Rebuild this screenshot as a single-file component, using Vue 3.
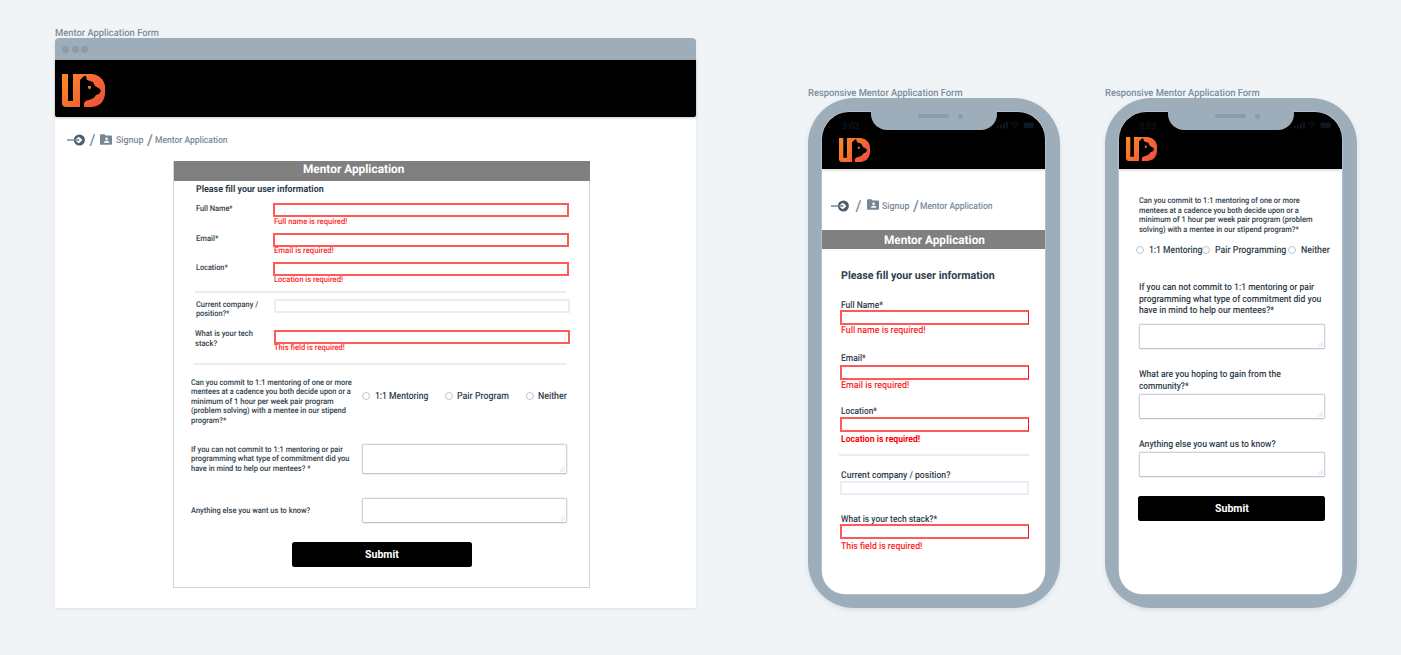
<script setup>
import { h } from 'vue'

// Condenses a line of text horizontally to its design width.
const vFit = {
  mounted(el, { value }) {
    const natural = el.offsetWidth
    if (!natural) return
    el.style.transform = `scaleX(${value / natural})`
    el.style.marginRight = `${value - natural}px`
  },
}

const desktopFields = [
  { id: 'name', label: [['Full Name*', 37]], error: ['Full name is required!', 73.5] },
  { id: 'email', label: [['Email*', 22]], error: ['Email is required!', 60] },
  { id: 'location', label: [['Location*', 32]], error: ['Location is required!', 69] },
]

const phoneFields = [
  { id: 'name', label: ['Full Name*', 42], error: ['Full name is required!', 84.5] },
  { id: 'email', label: ['Email*', 25], error: ['Email is required!', 68] },
  { id: 'location', label: ['Location*', 36], error: ['Location is required!', 79], strong: true },
  { id: 'company', label: ['Current company / position?', 109] },
  { id: 'stack', label: ['What is your tech stack?*', 96.5], error: ['This field is required!', 81.5] },
]

const commitDesktop = [
  ['Can you commit to 1:1 mentoring of one or more', 161],
  ['mentees at a cadence you both decide upon or a', 160],
  ['minimum of 1 hour per week pair program', 142.5],
  ['(problem solving) with a mentee in our stipend', 155],
  ['program?*', 35.5],
]
const otherDesktop = [
  ['If you can not commit to 1:1 mentoring or pair', 152],
  ['programming what type of commitment did you', 158.5],
  ['have in mind to help our mentees? *', 119.5],
]
const commitPhone = [
  ['Can you commit to 1:1 mentoring of one or more', 161],
  ['mentees at a cadence you both decide upon or a', 160],
  ['minimum of 1 hour per week pair program (problem', 174],
  ['solving) with a mentee in our stipend program?*', 159.5],
]
const otherPhone = [
  ['If you can not commit to 1:1 mentoring or pair', 175.5],
  ['programming what type of commitment did you', 182.5],
  ['have in mind to help our mentees?*', 135.5],
]
const gainPhone = [
  ['What are you hoping to gain from the', 142],
  ['community?*', 50],
]

const Logo = (props) =>
  h('svg', { viewBox: '0 0 43 33', preserveAspectRatio: 'none' }, [
    h('defs', [
      h('linearGradient', { id: props.gid, x1: 0, y1: 0, x2: 1, y2: 0.6 }, [
        h('stop', { offset: 0, 'stop-color': '#f98a26' }),
        h('stop', { offset: 1, 'stop-color': '#f1553a' }),
      ]),
    ]),
    h('path', {
      fill: `url(#${props.gid})`,
      d: 'M0 0H6V27H11V0H30C38 1 42 6 43 12V20C42 28 38 32 30 33H22V29C23 27 25 26 27 26C31 25 33 23 34 21L37 20L39 17L38 15L33 12L31 8L25 6L24 2L22 2L20 4L18 6V33H4Q0 33 0 29Z',
    }),
    h('path', { fill: '#f4692f', d: 'M26 12H29V14L27.5 15.5L26 14Z' }),
  ])
Logo.props = ['gid']

const LoginIcon = () =>
  h('svg', { viewBox: '0 0 19 12' }, [
    h('circle', { cx: 12.4, cy: 6, r: 5.5, fill: '#4a5b6b' }),
    h('circle', { cx: 11.6, cy: 6, r: 2.6, fill: '#fff' }),
    h('path', { d: 'M11.2 2.6L15.6 6L11.2 9.4Z', fill: '#fff' }),
    h('path', { d: 'M0 6H11', stroke: '#758492', 'stroke-width': 1.4 }),
    h('path', { d: 'M10.6 4.4L12.8 6L10.6 7.6Z', fill: '#758492' }),
  ])

const FolderIcon = () =>
  h('svg', { viewBox: '0 0 12 11' }, [
    h('path', { d: 'M0 1.2Q0 .3 .9 .3H4.4L5.6 1.6H11.1Q12 1.6 12 2.5V9.8Q12 10.7 11.1 10.7H.9Q0 10.7 0 9.8Z', fill: '#758797' }),
    h('circle', { cx: 6.6, cy: 4.7, r: 1.3, fill: '#fff' }),
    h('path', { d: 'M3.8 8.8C3.8 7.3 5.5 6.7 6.6 6.7S9.4 7.3 9.4 8.8Z', fill: '#fff' }),
  ])

const Grip = () =>
  h('svg', { viewBox: '0 0 6 6' }, [
    h('path', { d: 'M0 5.5L5.5 0M2 6L6 2M4 6L6 4', stroke: '#c8d0d8', 'stroke-width': 0.6, fill: 'none' }),
  ])

const StatusIcons = () =>
  h('svg', { viewBox: '0 0 38 8', fill: '#0d1822' }, [
    h('path', { d: 'M0 5H2V7.5H0ZM3 4H5V7.5H3ZM6 2.5H8V7.5H6ZM9 1H11V7.5H9Z' }),
    h('path', { d: 'M14 3Q18 -.5 22 3M15.5 5Q18 3 20.5 5', stroke: '#0d1822', 'stroke-width': 1.2, fill: 'none' }),
    h('path', { d: 'M16.8 6L18 7.5L19.2 6Z' }),
    h('rect', { x: 26.5, y: 1.5, width: 10.5, height: 5.5, rx: 1.2 }),
  ])
</script>

<template>
  <main class="canvas">
    <section class="board desktop">
      <div class="caption"><span v-fit="104" class="t">Mentor Application Form</span></div>
      <div class="window">
        <div class="chrome"><i></i><i></i><i></i></div>
        <header class="bar"><Logo gid="logo-desktop" class="logo" /></header>
        <nav class="crumbs">
          <LoginIcon class="login" /><span class="slash">/</span><FolderIcon class="folder" />
          <span v-fit="27" class="t signup">Signup</span><span class="slash second">/</span>
          <span v-fit="72.5" class="t">Mentor Application</span>
        </nav>
        <form class="form" @submit.prevent>
          <div class="title"><span v-fit="101.5" class="t">Mentor Application</span></div>
          <div class="intro"><span v-fit="128" class="t">Please fill your user information</span></div>
          <div v-for="f in desktopFields" :key="f.id" class="field" :class="f.id">
            <div class="label"><span v-for="l in f.label" :key="l[0]" v-fit="l[1]" class="t">{{ l[0] }}</span></div>
            <div class="entry">
              <div class="input bad"></div>
              <div class="error"><span v-fit="f.error[1]" class="t">{{ f.error[0] }}</span></div>
            </div>
          </div>
          <div class="rule"></div>
          <div class="field company">
            <div class="label"><span v-fit="62.5" class="t">Current company /</span><span v-fit="33" class="t">position?*</span></div>
            <div class="entry"><div class="input"></div></div>
          </div>
          <div class="field stack">
            <div class="label"><span v-fit="58" class="t">What is your tech</span><span v-fit="22" class="t">stack?</span></div>
            <div class="entry">
              <div class="input bad"></div>
              <div class="error"><span v-fit="71" class="t">This field is required!</span></div>
            </div>
          </div>
          <div class="rule low"></div>
          <div class="ask commit">
            <div class="question"><span v-for="l in commitDesktop" :key="l[0]" v-fit="l[1]" class="t">{{ l[0] }}</span></div>
            <div class="radios">
              <label><i></i><span v-fit="53" class="t">1:1 Mentoring</span></label>
              <label><i></i><span v-fit="52" class="t">Pair Program</span></label>
              <label><i></i><span v-fit="29" class="t">Neither</span></label>
            </div>
          </div>
          <div class="ask other">
            <div class="question"><span v-for="l in otherDesktop" :key="l[0]" v-fit="l[1]" class="t">{{ l[0] }}</span></div>
            <div class="area tall"><Grip class="grip" /></div>
          </div>
          <div class="ask more">
            <div class="question"><span v-fit="119" class="t">Anything else you want us to know?</span></div>
            <div class="area"><Grip class="grip" /></div>
          </div>
          <button class="submit"><span v-fit="33.5" class="t">Submit</span></button>
        </form>
      </div>
    </section>

    <section class="board phone-one">
      <div class="caption"><span v-fit="154.5" class="t">Responsive Mentor Application Form</span></div>
      <div class="phone">
        <div class="screen">
          <header class="bar"><Logo gid="logo-one" class="logo" /></header>
          <nav class="crumbs">
            <LoginIcon class="login" /><span class="slash">/</span><FolderIcon class="folder" />
            <span v-fit="27" class="t signup">Signup</span><span class="slash second">/</span>
            <span v-fit="72.5" class="t">Mentor Application</span>
          </nav>
          <div class="title"><span v-fit="101" class="t">Mentor Application</span></div>
          <div class="intro"><span v-fit="153.5" class="t">Please fill your user information</span></div>
          <template v-for="f in phoneFields" :key="f.id">
            <div class="entry" :class="f.id">
              <div class="label"><span v-fit="f.label[1]" class="t">{{ f.label[0] }}</span></div>
              <div class="input" :class="{ bad: f.error }"></div>
              <div v-if="f.error" class="error" :class="{ strong: f.strong }"><span v-fit="f.error[1]" class="t">{{ f.error[0] }}</span></div>
            </div>
          </template>
        </div>
        <div class="notch"><i class="speaker"></i><i class="camera"></i></div>
        <div class="clock"><span v-fit="17.5" class="t">3:03</span></div>
        <StatusIcons class="status" />
      </div>
    </section>

    <section class="board phone-two">
      <div class="caption"><span v-fit="154.5" class="t">Responsive Mentor Application Form</span></div>
      <div class="phone">
        <div class="screen">
          <header class="bar"><Logo gid="logo-two" class="logo" /></header>
          <div class="question small"><span v-for="l in commitPhone" :key="l[0]" v-fit="l[1]" class="t">{{ l[0] }}</span></div>
          <div class="radios">
            <label><i></i><span v-fit="53" class="t">1:1 Mentoring</span></label>
            <label><i></i><span v-fit="71" class="t">Pair Programming</span></label>
            <label class="last"><i></i><span v-fit="29" class="t">Neither</span></label>
          </div>
          <div class="question other"><span v-for="l in otherPhone" :key="l[0]" v-fit="l[1]" class="t">{{ l[0] }}</span></div>
          <div class="area first"><Grip class="grip" /></div>
          <div class="question gain"><span v-for="l in gainPhone" :key="l[0]" v-fit="l[1]" class="t">{{ l[0] }}</span></div>
          <div class="area second"><Grip class="grip" /></div>
          <div class="question more"><span v-fit="136.5" class="t">Anything else you want us to know?</span></div>
          <div class="area third"><Grip class="grip" /></div>
          <button class="submit"><span v-fit="33.5" class="t">Submit</span></button>
        </div>
        <div class="notch"><i class="speaker"></i><i class="camera"></i></div>
        <div class="clock"><span v-fit="17.5" class="t">3:03</span></div>
        <StatusIcons class="status" />
      </div>
    </section>
  </main>
</template>

<style>
body { background: #f0f4f7; overflow: hidden; }
</style>

<style scoped>
.canvas, .canvas * { box-sizing: border-box; }
.canvas {
  position: relative; width: 1401px; height: 655px; overflow: hidden; background: #f0f4f7;
  font-family: Roboto, "Liberation Sans", sans-serif; font-weight: 500; color: #303e4b;
  text-rendering: geometricPrecision;
}
.t { display: block; width: max-content; white-space: nowrap; transform-origin: 0 50%; }
.board { position: absolute; }
.desktop { left: 55px; top: 27px; width: 641px; }
.phone-one { left: 808px; top: 87px; width: 252px; }
.phone-two { left: 1105px; top: 87px; width: 252px; }
.caption { height: 11px; font-size: 10px; line-height: 14px; color: #7b8b99; }

/* shared parts */
.bar { background: #000; box-shadow: 0 1px 3px rgba(0, 0, 0, .2); border-radius: 0 0 2px 2px; }
.logo { display: block; }
.crumbs { display: flex; align-items: center; height: 14px; font-size: 9.5px; line-height: 14px; color: #7b8b99; }
.crumbs .t { padding-top: 1px; }
.login { width: 19px; height: 12px; flex: none; }
.folder { width: 12px; height: 11px; flex: none; }
.slash { font-size: 15px; font-weight: 500; width: 6px; flex: none; }
.title { background: #808080; color: #fff; font-weight: 700; font-size: 12px; display: flex; justify-content: center; }
.input { border: 2px solid #e9eef4; background: #fff; }
.input.bad { border-color: #ff5a5a; }
.error { color: #ff2626; }
.area { position: relative; height: 25px; border: 1px solid #cbd4dd; border-bottom-color: #b9c5d2; border-radius: 2px; background: #fff; box-shadow: 0 0 0 .5px #dde3ea; }
.grip { position: absolute; right: 1px; bottom: 1px; width: 6px; height: 6px; }
.submit { display: flex; align-items: center; justify-content: center; height: 25px; padding: 0; border: 0; border-radius: 2.5px; background: #000; color: #fff; font: 700 11px/14px Roboto, sans-serif; }
.radios { display: flex; align-items: flex-start; font-size: 10px; line-height: 12px; }
.radios label { display: flex; align-items: center; height: 12px; }
.radios i { width: 8px; height: 8px; border: 1px solid #bac5d0; border-radius: 50%; margin: -1px 4.5px 0 0; flex: none; }
.radios .t { padding-top: 1px; }

/* desktop window */
.window { height: 570px; background: #fff; border-radius: 4px 4px 0 0; box-shadow: 0 1px 3px rgba(80, 100, 120, .12); }
.chrome { height: 22px; background: #9eadba; border-radius: 4px 4px 0 0; display: flex; align-items: center; gap: 2.5px; padding-left: 7px; }
.chrome i { width: 7px; height: 7px; border-radius: 50%; background: #8b9baa; }
.desktop .bar { height: 57px; padding: 14px 0 0 7px; }
.desktop .logo { width: 43px; height: 33px; }
.desktop .crumbs { margin: 16px 0 0 12px; }
.desktop .login { margin-right: 3.5px; }
.desktop .folder { margin: 0 0 2px 4px; }
.desktop .signup { margin-left: 4px; }
.desktop .second { margin-left: 4px; }
.desktop .crumbs .t:last-child { margin-left: 2.5px; }
.form { width: 417px; height: 427px; margin: 14px 0 0 118px; border: 1px solid #cdd6df; border-top: 0; font-size: 8px; line-height: 9.6px; }
.form .title { height: 20px; margin: 0 -1px 0 0; line-height: 17px; padding-right: 56px; }
.form .intro { height: 22px; padding: 2.5px 0 0 22px; font-size: 9.5px; line-height: 12px; font-weight: 700; }
.field { display: grid; grid-template-columns: 77px 296px; height: 29px; margin-left: 22px; }
.field.name { height: 30px; }
.field .label { padding-top: .7px; }
.field .input { height: 13.5px; }
.field .error { height: 9px; padding-left: 1px; line-height: 9px; }
.field.email .error, .field.location .error, .field.stack .error { margin-top: -1px; }
.rule { width: 371px; height: 2px; margin: 0 0 6px 21px; background: #e9eef2; }
.field.company { height: 31px; grid-template-columns: 78px 296px; }
.field.stack { height: 33px; margin-left: 21px; grid-template-columns: 79px 296px; }
.field.stack .label { padding-top: 0; margin-top: -1px; }
.field.stack .error { padding-left: 0; }
.rule.low { width: 374px; margin-left: 19px; margin-bottom: 0; }
.ask { display: grid; grid-template-columns: 170.5px 205px; padding-left: 17px; }
.ask.commit { height: 79px; padding-top: 12.5px; }
.commit .radios { margin: 13px 0 0 .5px; width: 205px; justify-content: space-between; }
.ask.other { height: 54px; }
.other .question { padding-top: .7px; }
.other .area.tall { height: 29.5px; }
.ask.more { height: 44px; }
.more .question { padding-top: 7.5px; }
.more .area { margin-left: .5px; margin-right: -.5px; }
.form .submit { width: 180px; margin-left: 118px; }

/* phones */
.phone { position: relative; height: 510px; margin-top: 0; background: #9eadba; border-radius: 46px; padding: 14px; box-shadow: 0 2px 5px rgba(80, 100, 120, .14); }
.screen { width: 223.4px; height: 482px; border-radius: 27px 27px 23px 23px; overflow: hidden; background: #fff; box-shadow: 0 0 0 .5px #c6d0d8; }
.phone .bar { height: 57px; padding: 26px 0 0 17px; border-radius: 0; }
.phone .logo { width: 31px; height: 24px; }
.phone-two .bar { padding: 25px 0 0 7px; }
.notch { position: absolute; left: 63px; top: 12px; width: 126px; height: 20px; background: #9eadba; border-radius: 0 0 16px 16px; display: flex; justify-content: flex-end; align-items: flex-start; padding: 4px 34px 0 0; gap: 9px; }
.phone-two .notch, .phone-two .status { margin-left: -.5px; }
.speaker { width: 31px; height: 4px; border-radius: 2px; background: #8b9baa; }
.camera { width: 5px; height: 5px; border-radius: 50%; background: #8b9baa; margin-top: -.5px; }
.clock { position: absolute; left: 34px; top: 22px; font-size: 9.5px; line-height: 13px; color: #0d1822; }
.status { position: absolute; left: 189px; top: 23px; width: 38px; height: 8px; }
.phone-one .crumbs { margin: 30px 0 0 9px; }
.phone-one .slash { margin-left: 5.5px; }
.phone-one .folder { margin: 0 2.5px 3px 5.5px; }
.phone-one .second { margin-left: 4px; }
.phone-one .crumbs .t:last-child { margin-left: 1.5px; }
.phone-one .title { height: 19px; margin-top: 17px; line-height: 20px; padding-left: 1px; }
.phone-one .intro { height: 51px; padding: 19.5px 0 0 19px; font-size: 11px; line-height: 13px; font-weight: 700; }
.phone-one .entry { margin-left: 18px; width: 189px; font-size: 9.5px; line-height: 12px; }
.phone-one .label { height: 10px; padding-left: 1px; }
.phone-one .input { height: 15px; }
.phone-one .input.bad { border-right: 1px solid #ff1010; }
.phone-one .error { height: 9.5px; margin-top: 1px; padding-left: 1px; line-height: 10px; }
.phone-one .error.strong { color: #ff0000; font-weight: 700; line-height: 11px; }
.phone-one .entry.name { height: 53px; }
.phone-one .entry.email { height: 53px; }
.phone-one .email .label { height: 12px; }
.phone-one .entry.location { height: 50px; border-bottom: 2px solid #e9eef2; margin-left: 17px; width: 190px; padding-left: 1px; }
.phone-one .location .label { height: 11px; }
.phone-one .location .error { margin-top: 2px; }
.phone-one .entry.company { height: 58px; padding-top: 14px; }
.phone-one .company .label { height: 11px; }
.phone-one .company .input { height: 14px; }
.phone-one .stack .error { margin-top: 3px; }
.phone-two .question { margin-left: 20px; font-size: 9.5px; line-height: 11.5px; }
.phone-two .question.small { margin-top: 27px; height: 48px; font-size: 8px; line-height: 9.6px; }
.phone-two .radios { margin-left: 17px; padding-top: .8px; height: 38px; }
.phone-two .radios label + label { margin-left: .5px; }
.phone-two .radios label.last { margin-left: 2px; }
.phone-two .question.other { height: 42px; }
.phone-two .area { width: 186px; margin-left: 19.5px; }
.phone-two .question.gain { margin-top: 20px; height: 25px; }
.phone-two .question.more { margin-top: 20px; padding: 0; height: 9px; line-height: 12px; }
.phone-two .third { margin-top: 4px; margin-right: 0; }
.phone-two .submit { width: 186.5px; margin: 19px 0 0 19.4px; }
</style>
